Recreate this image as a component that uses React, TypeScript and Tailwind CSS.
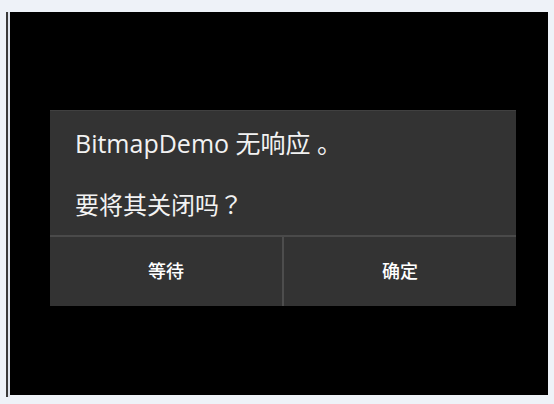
export default function App() {
  return (
    <div
      className="w-[554px] h-[404px] bg-[#eef2f8] pl-[6px] pt-[12px] flex"
      style={{ fontFamily: '"Open Sans", "Noto Sans CJK SC", sans-serif' }}
    >
      <div className="w-[2px] h-[385px] bg-[#3a3a3a]" />
      <div className="w-[2px] h-[385px] bg-[#dfe4ec]" />
      <div className="w-[538px] h-[383px] bg-black pt-[98px] pl-[40px]">
        <div className="w-[466px] h-[196px] bg-[#333333] border-t border-[#404040] flex flex-col">
          <div className="h-[124px] pl-[25px] pt-[16px] flex flex-col gap-[29px] leading-[32px] text-[#f2f2f2]">
            <p className="text-[25px]">BitmapDemo 无响应 。</p>
            <p className="text-[24px]">
              要将其关闭吗
              <span className="font-['Noto_Sans_CJK_TC',sans-serif]">？</span>
            </p>
          </div>
          <div className="h-[2px] bg-[#4a4a4a]" />
          <div className="flex flex-1">
            <button className="flex-1 flex items-center justify-center text-[18px] font-medium text-white">
              等待
            </button>
            <div className="w-[2px] bg-[#4d4d4d]" />
            <button className="flex-1 flex items-center justify-center text-[18px] font-medium text-white">
              确定
            </button>
          </div>
        </div>
      </div>
    </div>
  );
}
